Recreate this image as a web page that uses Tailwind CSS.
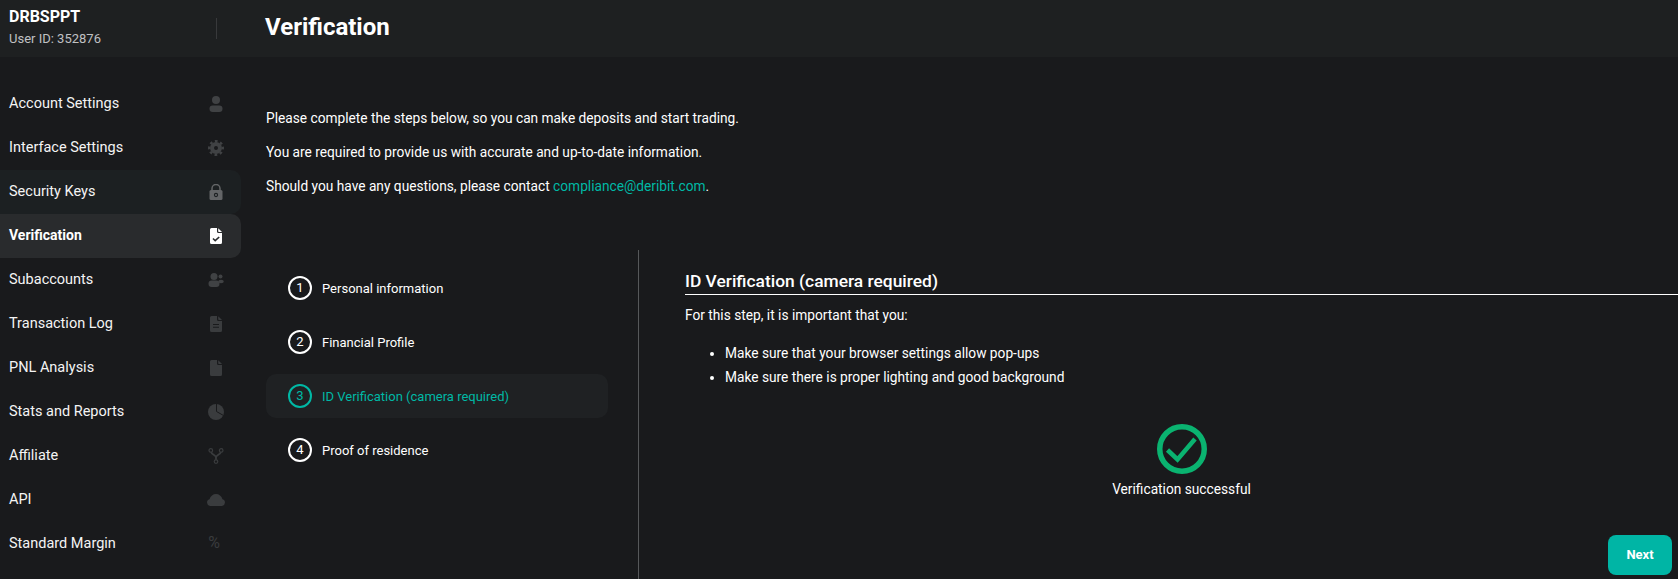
<!DOCTYPE html>
<html lang="en">

<head>
    <meta charset="UTF-8">
    <meta name="viewport" content="width=device-width, initial-scale=1.0">
    <script src="https://cdn.jsdelivr.net/npm/@tailwindcss/browser@4"></script>
    <title>Verification</title>
</head>

<body class="bg-[#191a1c] text-white font-['Roboto',sans-serif] h-[579px] overflow-hidden">

    <!-- Top bar -->
    <header class="flex items-center h-[57px] bg-[#1e2021]">
        <div class="w-[216px] pl-[9px] pb-[3px]">
            <div class="text-[16px] leading-[20px] font-bold">DRBSPPT</div>
            <div class="text-[13px] leading-[18px] mt-[3px] text-[#c0c1c3]">User ID: 352876</div>
        </div>
        <div class="w-px h-[21px] bg-[#38393b]"></div>
        <h1 class="ml-[48px] mb-[4px] text-[24px] leading-[30px] font-bold">Verification</h1>
    </header>

    <div class="flex">
        <!-- Sidebar -->
        <nav class="w-[241px] pt-[25px] text-[14.5px] text-[#f4f4f4] shrink-0">
            <a class="flex items-center justify-between h-[44px] pl-[9px] pr-[15px]">
                <span>Account Settings</span>
                <svg class="w-[20px] h-[16px] text-[#404244]" viewBox="0 0 20 16" fill="currentColor"><circle cx="10" cy="4" r="4"/><rect x="3.500" y="9.500" width="13" height="6.500" rx="3.250"/></svg>
            </a>
            <a class="flex items-center justify-between h-[44px] pl-[9px] pr-[15px]">
                <span>Interface Settings</span>
                <svg class="w-[20px] h-[16px] text-[#404244]" viewBox="0 0 20 16" fill="none" stroke="currentColor"><circle cx="10" cy="8" r="4" stroke-width="4"/><circle cx="10" cy="8" r="6.800" stroke-width="2.400" stroke-dasharray="2.670 2.670" transform="rotate(-11 10 8)"/></svg>
            </a>
            <a class="flex items-center justify-between h-[44px] pl-[9px] pr-[15px] bg-[#1c2022] rounded-r-[10px]">
                <span>Security Keys</span>
                <svg class="w-[20px] h-[16px]" viewBox="0 0 20 16" fill="none"><path stroke="#636567" stroke-width="1.500" d="M6 7V4.500a4 4 0 0 1 8 0V7"/><rect x="3.500" y="6" width="13" height="10" rx="1.500" fill="#636567"/><circle cx="10" cy="11" r="1.600" stroke="#1c2022" stroke-width="1.100"/></svg>
            </a>
            <a class="flex items-center justify-between h-[44px] pl-[9px] pr-[15px] bg-[#292b2d] rounded-r-[10px] text-[14px] font-bold text-white">
                <span class="-mt-[1px]">Verification</span>
                <svg class="w-[20px] h-[16px]" viewBox="0 0 20 16" fill="none"><path fill="#fff" d="M5.500 0H11V3.500a1.500 1.500 0 0 0 1.500 1.500H16v9.500a1.500 1.500 0 0 1-1.500 1.500h-9A1.500 1.500 0 0 1 4 14.500V1.500A1.500 1.500 0 0 1 5.500 0z"/><path fill="#fff" d="M12.200 .3L16 4h-3a.8.8 0 0 1-.8-.8z"/><path stroke="#292b2d" stroke-width="1.600" d="M7 10.500l2.200 2.200 4-3.700"/></svg>
            </a>
            <a class="flex items-center justify-between h-[44px] pl-[9px] pr-[15px]">
                <span>Subaccounts</span>
                <svg class="w-[20px] h-[16px] text-[#404244]" viewBox="0 0 20 16" fill="currentColor"><circle cx="8" cy="4.500" r="3.500"/><rect x="2.500" y="8.500" width="11" height="6.500" rx="3.250"/><circle cx="14.500" cy="4.500" r="2"/><ellipse cx="15" cy="9.500" rx="2.800" ry="1.800"/></svg>
            </a>
            <a class="flex items-center justify-between h-[44px] pl-[9px] pr-[15px]">
                <span>Transaction Log</span>
                <svg class="w-[20px] h-[16px] text-[#3a3c3e]" viewBox="0 0 20 16" fill="currentColor"><path fill-rule="evenodd" d="M5.500 0H11V3.500a1.500 1.500 0 0 0 1.500 1.500H16v9.500a1.500 1.500 0 0 1-1.500 1.500h-9A1.500 1.500 0 0 1 4 14.500V1.500A1.500 1.500 0 0 1 5.500 0zM7 8v1.100h6V8zm0 2.700v1.100h6v-1.100z"/><path d="M12.200 .3L16 4h-3a.8.8 0 0 1-.8-.8z"/></svg>
            </a>
            <a class="flex items-center justify-between h-[44px] pl-[9px] pr-[15px]">
                <span>PNL Analysis</span>
                <svg class="w-[20px] h-[16px] text-[#3a3c3e]" viewBox="0 0 20 16" fill="currentColor"><path d="M5.500 0H11V3.500a1.500 1.500 0 0 0 1.500 1.500H16v9.500a1.500 1.500 0 0 1-1.500 1.500h-9A1.500 1.500 0 0 1 4 14.500V1.500A1.500 1.500 0 0 1 5.500 0z"/><path d="M12.200 .3L16 4h-3a.8.8 0 0 1-.8-.8z"/></svg>
            </a>
            <a class="flex items-center justify-between h-[44px] pl-[9px] pr-[15px]">
                <span>Stats and Reports</span>
                <svg class="w-[20px] h-[16px]" viewBox="0 0 20 16" fill="none"><circle cx="10" cy="8" r="8" fill="#3a3c3e"/><path stroke="#191a1c" stroke-width="1" d="M10.500 0V7.500L17.500 11.500"/></svg>
            </a>
            <a class="flex items-center justify-between h-[44px] pl-[9px] pr-[15px]">
                <span>Affiliate</span>
                <svg class="w-[20px] h-[16px] text-[#3a3c3e]" viewBox="0 0 20 16" fill="none" stroke="currentColor" stroke-width="1.200"><circle cx="4.800" cy="2.400" r="1.800"/><circle cx="15.200" cy="2.400" r="1.800"/><circle cx="10" cy="13.600" r="1.800"/><path stroke-width="1.800" d="M5.200 4.200c.4 2.800 4.800 2.500 4.800 5.300v2.300M14.800 4.200c-.4 2.800-4.800 2.500-4.800 5.300"/></svg>
            </a>
            <a class="flex items-center justify-between h-[44px] pl-[9px] pr-[15px]">
                <span>API</span>
                <svg class="w-[20px] h-[16px] text-[#3a3c3e]" viewBox="0 0 20 16" fill="currentColor"><path d="M4 14A3.500 3.500 0 0 1 3.500 7.200C4.500 4 7 2 10 2c3 0 5.500 2 6.500 5.200A3.500 3.500 0 0 1 16 14z"/></svg>
            </a>
            <a class="flex items-center justify-between h-[44px] pl-[9px] pr-[15px]">
                <span>Standard Margin</span>
                <span class="w-[20px] pr-[4px] -mt-[3px] text-center text-[16px] leading-[20px] text-[#3a3c3e]">%</span>
            </a>
        </nav>

        <main class="flex-1 pl-[25px] pt-[51px] min-w-0">
            <div class="text-[13.72px] leading-[20px]">
                <p class="mb-[14px]">Please complete the steps below, so you can make deposits and start trading.</p>
                <p class="mb-[14px]">You are required to provide us with accurate and up-to-date information.</p>
                <p>Should you have any questions, please contact <a class="text-[#00b8a5]">compliance@deribit.com</a>.</p>
            </div>

            <div class="flex mt-[54px] h-[329px]">
                <!-- Steps -->
                <div class="w-[373px] pr-[30px] pt-[16px] border-r border-[#56585a] shrink-0 flex flex-col gap-[10px] text-[13px]">
                    <div class="flex items-center h-[44px] pl-[22px] gap-[10px]">
                        <div class="w-[24px] h-[24px] rounded-full border-2 border-white flex items-center justify-center">1</div>
                        <span class="mt-[2px]">Personal information</span>
                    </div>
                    <div class="flex items-center h-[44px] pl-[22px] gap-[10px]">
                        <div class="w-[24px] h-[24px] rounded-full border-2 border-white flex items-center justify-center">2</div>
                        <span class="mt-[2px]">Financial Profile</span>
                    </div>
                    <div class="flex items-center h-[44px] pl-[22px] gap-[10px] bg-[#1f2123] rounded-[10px] text-[#00b8a5]">
                        <div class="w-[24px] h-[24px] rounded-full border-2 border-[#00b8a5] flex items-center justify-center">3</div>
                        <span class="mt-[2px]">ID Verification (camera required)</span>
                    </div>
                    <div class="flex items-center h-[44px] pl-[22px] gap-[10px]">
                        <div class="w-[24px] h-[24px] rounded-full border-2 border-white flex items-center justify-center">4</div>
                        <span class="mt-[2px]">Proof of residence</span>
                    </div>
                </div>

                <!-- Current step -->
                <div class="flex-1 pl-[46px] pt-[20px] min-w-0">
                    <h2 class="text-[17.4px] leading-[22px] font-medium pb-[2px] border-b border-white">ID Verification (camera required)</h2>
                    <p class="text-[13.72px] leading-[20px] mt-[10px]">For this step, it is important that you:</p>
                    <ul class="list-disc mt-[16px] pl-[40px] text-[13.72px] leading-[24px]">
                        <li>Make sure that your browser settings allow pop-ups</li>
                        <li>Make sure there is proper lighting and good background</li>
                    </ul>
                    <div class="flex flex-col items-center mt-[35px] text-[13.72px]">
                        <svg class="w-[50px] h-[50px]" viewBox="0 0 50 50" fill="none" stroke="#0ab370"><circle cx="25" cy="25" r="22.250" stroke-width="5.500"/><path stroke-width="4.500" d="M10.500 26l10 9.500 17.500-20.500"/></svg>
                        <div class="mt-[5px] leading-[20px]">Verification successful</div>
                    </div>
                    <div class="flex justify-end mt-[36px] mr-[6px]">
                        <button class="w-[64px] h-[40px] rounded-[8px] bg-[#00b5a5] text-[13px] font-bold">Next</button>
                    </div>
                </div>
            </div>
        </main>
    </div>

</body>

</html>
